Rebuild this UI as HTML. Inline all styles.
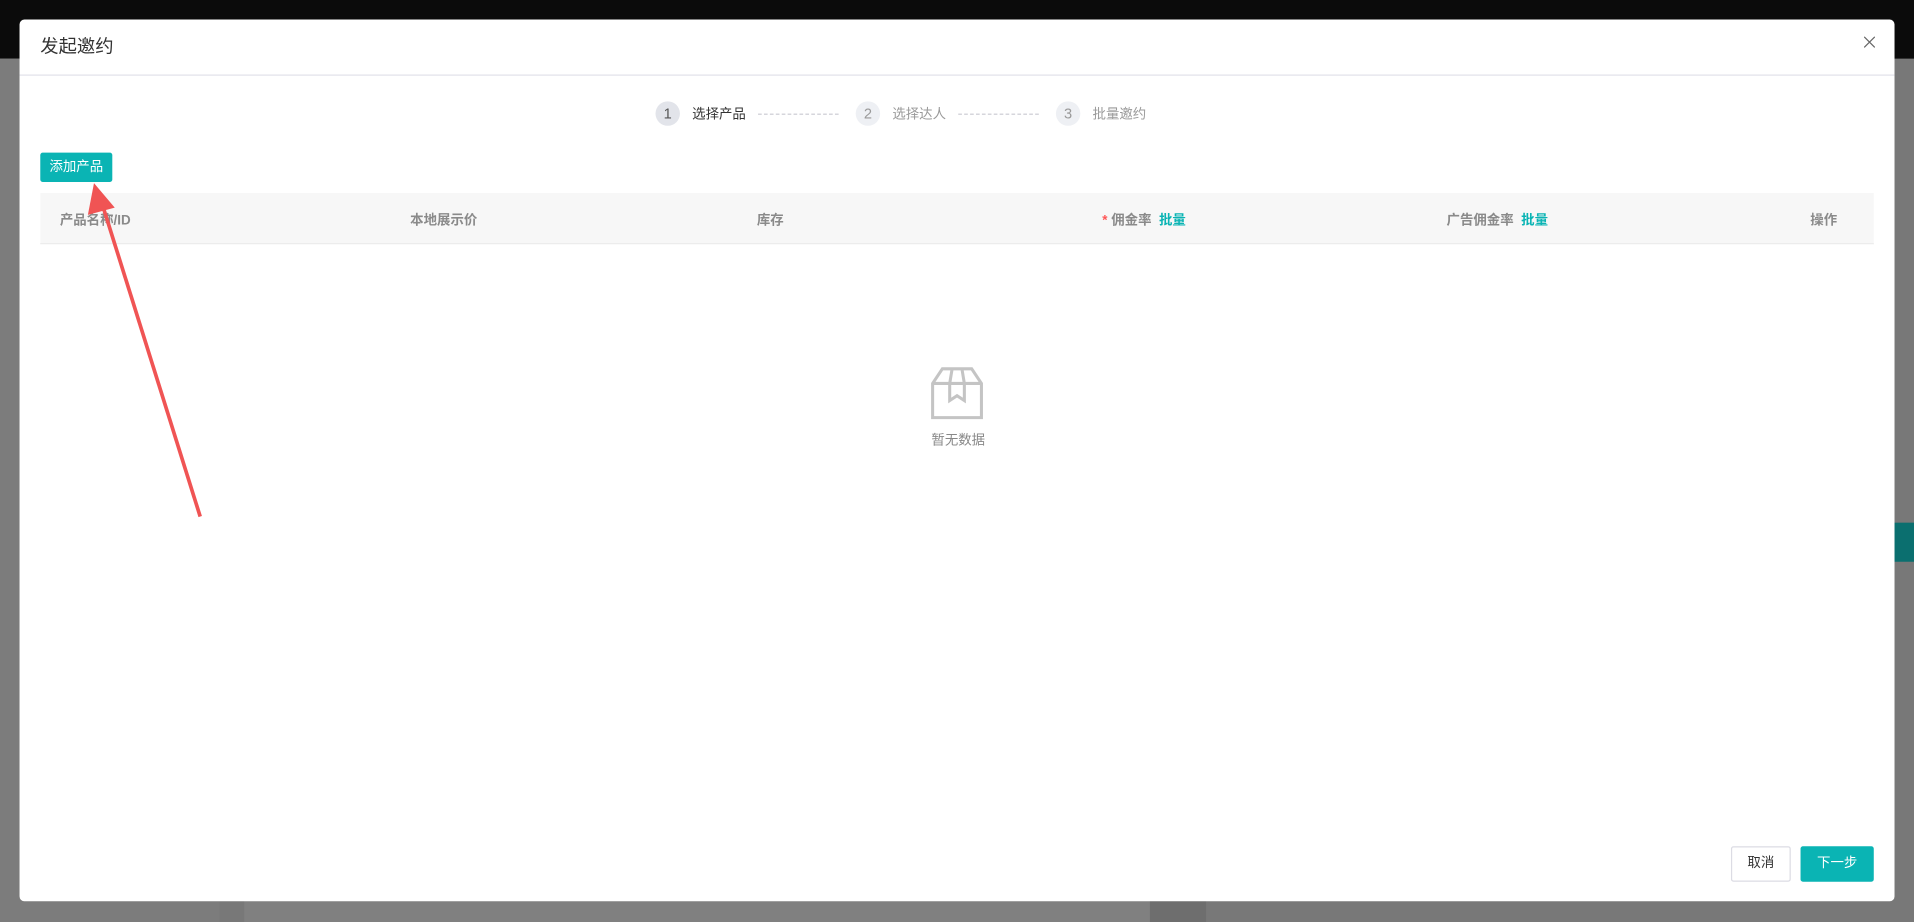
<!DOCTYPE html>
<html><head><meta charset="utf-8"><style>
html,body{margin:0;padding:0;width:1914px;height:922px;overflow:hidden;background:#787878;}
#w{position:absolute;left:0;top:0;width:1568px;height:755px;transform:scale(1.2207,1.2212);transform-origin:0 0;font-family:"Liberation Sans","Noto Sans CJK SC",sans-serif;}
.a{position:absolute;}
.t{position:absolute;white-space:nowrap;font-size:11px;line-height:14px;}
.c{position:absolute;width:20px;height:20px;border-radius:50%;background:#eef0f4;color:#999;font-size:12px;line-height:20px;text-align:center;}
.d{position:absolute;top:93px;height:0;border-top:1px dashed #c8c8d0;}
.h{position:absolute;top:172px;font-size:11px;color:#8a8a8a;font-weight:bold;white-space:nowrap;}
</style></head><body><div id="w">
<div class="a" style="left:0;top:0;width:1568px;height:48px;background:#0b0b0b;"></div>
<div class="a" style="left:0;top:48px;width:180px;height:707px;background:#7c7c7c"></div>
<div class="a" style="left:200px;top:700px;width:742px;height:55px;background:#808080"></div>
<div class="a" style="left:942px;top:700px;width:46px;height:55px;background:#6e6e6e"></div>
<div class="a" style="left:1535px;top:428px;width:33px;height:32px;background:#0b6f6f"></div>
<div class="a" style="left:16px;top:16px;width:1536px;height:722px;background:#fff;border-radius:4px;"></div>
<div class="t" style="left:33px;top:29px;font-size:15px;line-height:20px;color:#333">发起邀约</div>
<svg class="a" style="left:1527px;top:30px" width="9" height="9" viewBox="0 0 9 9" stroke="#666" stroke-width="1"><path d="M0 0L9 9M9 0L0 9"/></svg>
<div class="a" style="left:16px;top:61px;width:1536px;height:1px;background:#e2e2ea"></div>
<div class="c" style="left:537px;top:83px;background:#e2e4ea;color:#555">1</div>
<div class="t" style="left:567px;top:87px;color:#333">选择产品</div>
<div class="d" style="left:621px;width:66px"></div>
<div class="c" style="left:701px;top:83px">2</div>
<div class="t" style="left:731px;top:87px;color:#999">选择达人</div>
<div class="d" style="left:785px;width:66px"></div>
<div class="c" style="left:865px;top:83px">3</div>
<div class="t" style="left:895px;top:87px;color:#999">批量邀约</div>
<div class="a" style="left:33px;top:125px;width:59px;height:24px;background:#0ab4b4;border-radius:2px;color:#fff;font-size:11px;line-height:24px;text-align:center">添加产品</div>
<div class="a" style="left:33px;top:158px;width:1502px;height:41px;background:#f7f7f7;border-bottom:1px solid #ececec"></div>
<div class="h" style="left:49px">产品名称/ID</div>
<div class="h" style="left:336px">本地展示价</div>
<div class="h" style="left:620px">库存</div>
<div class="h" style="left:903px"><span style="color:#f55">*</span> 佣金率 &nbsp;<span style="color:#0ab4b4">批量</span></div>
<div class="h" style="left:1185px">广告佣金率 &nbsp;<span style="color:#0ab4b4">批量</span></div>
<div class="h" style="left:1483px">操作</div>
<svg class="a" style="left:760px;top:298px" width="48" height="48" viewBox="0 0 48 48" fill="none" stroke="#c4c4c4" stroke-width="2.5"><path d="M4 16 L12 4 H36 L44 16 V44 H4 Z M4 16 H44 M18 16 V30 L24 26 L30 30 V16 M18 16 L20 4 M30 16 L28 4"/></svg>
<div class="t" style="left:763px;top:354px;color:#888">暂无数据</div>
<div class="a" style="left:1418px;top:693px;width:47px;height:27px;border:1px solid #dcdce4;border-radius:2px;font-size:11px;line-height:27px;text-align:center;color:#333">取消</div>
<div class="a" style="left:1475px;top:693px;width:60px;height:29px;background:#0ab4b4;border-radius:2px;font-size:11px;line-height:29px;text-align:center;color:#fff">下一步</div>
<svg class="a" style="left:0;top:0" width="1568" height="755"><path d="M164 423 L84 168" stroke="#f05454" stroke-width="3"/><path d="M77 150 L72 176 L94 170 Z" fill="#f05454"/></svg>
</div></body></html>
